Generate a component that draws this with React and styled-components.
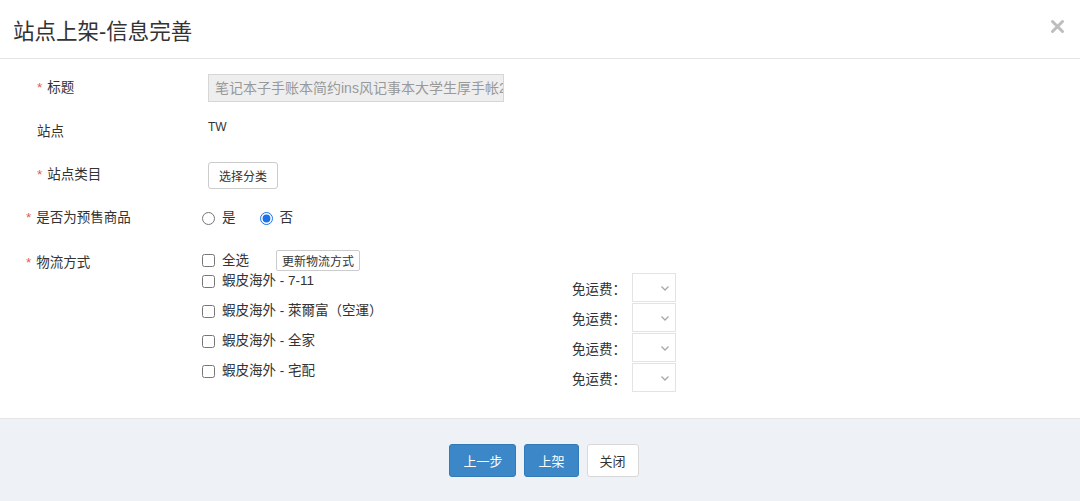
import React, { useState } from "react";
import styled, { createGlobalStyle } from "styled-components";

const GlobalStyle = createGlobalStyle`
  html, body {
    margin: 0;
    padding: 0;
    background: #fff;
  }
  body {
    font-family: "Liberation Sans", "Noto Sans CJK SC", sans-serif;
    color: #333;
  }
`;

const Dialog = styled.div`
  width: 1080px;
  height: 501px;
  display: flex;
  flex-direction: column;
  background: #fff;
`;

const Header = styled.div`
  height: 58px;
  border-bottom: 1px solid #e5e5e5;
  display: flex;
  align-items: center;
  justify-content: space-between;
  padding: 0 15px 0 13px;
`;

const Title = styled.h3`
  margin: 0;
  font-size: 21.5px;
  font-weight: normal;
  color: #333;
`;

const CloseButton = styled.button`
  border: none;
  background: none;
  padding: 0;
  margin-top: -6px;
  cursor: pointer;
  display: flex;
`;

const Body = styled.div`
  flex: 1;
  padding-top: 7px;
`;

const FormRow = styled.div`
  display: grid;
  grid-template-columns: 202px 1fr;
  align-items: ${(p) => (p.$top ? "start" : "center")};
  height: ${(p) => (p.$h ? `${p.$h}px` : "auto")};
  padding-top: ${(p) => p.$pt || 0}px;
`;

const Label = styled.div`
  font-size: 13.5px;
  line-height: 20px;
  color: #333;
  padding-left: ${(p) => p.$indent}px;
  padding-top: ${(p) => p.$pt || 0}px;
`;

const Star = styled.span`
  color: #e05a4b;
  margin-right: 5px;
`;

const Value = styled.div`
  padding-left: ${(p) => p.$indent || 0}px;
  padding-top: ${(p) => p.$pt || 0}px;
  align-self: ${(p) => (p.$pt ? "start" : "auto")};
`;

const ReadonlyInput = styled.div`
  width: 296px;
  height: 28px;
  box-sizing: border-box;
  border: 1px solid #d6d6d6;
  background: #eeeeee;
  color: #999;
  font-size: 14px;
  line-height: 26px;
  padding-left: 6px;
  white-space: nowrap;
  overflow: hidden;
`;

const PlainText = styled.span`
  font-size: 12px;
  color: #333;
`;

const SmallButton = styled.button`
  font-family: inherit;
  font-size: 12px;
  color: #333;
  background: #fff;
  border: 1px solid #ccc;
  border-radius: ${(p) => (p.$tiny ? 2 : 3)}px;
  height: ${(p) => (p.$tiny ? 21 : 27)}px;
  padding: 0 ${(p) => (p.$tiny ? 5 : 10)}px;
  margin-left: ${(p) => p.$ml || 0}px;
  cursor: pointer;
`;

const RadioGroup = styled.div`
  display: flex;
  align-items: center;
`;

const Choice = styled.label`
  display: inline-flex;
  align-items: center;
  font-size: 13.5px;
  line-height: 20px;
  color: #333;
  margin-right: ${(p) => p.$mr || 0}px;

  input {
    margin: 0 7px 0 0;
    width: 13px;
    height: 13px;
    accent-color: #1a73e8;
  }
`;

const Shipping = styled.div`
  display: flex;
  align-items: flex-start;
`;

const CheckList = styled.div`
  width: 370px;
  display: flex;
  flex-direction: column;
`;

const CheckRow = styled.div`
  display: flex;
  align-items: center;
  height: ${(p) => (p.$first ? 21 : 20)}px;
  margin-top: ${(p) => (p.$first ? 0 : p.$gap)}px;
`;

const FeeColumn = styled.div`
  margin-top: 23px;
  display: flex;
  flex-direction: column;
`;

const FeeRow = styled.div`
  display: flex;
  align-items: center;
  height: 30px;
`;

const FeeLabel = styled.span`
  font-size: 13.5px;
  color: #333;
  width: 60px;
`;

const FeeSelect = styled.div`
  width: 44px;
  height: 29px;
  box-sizing: border-box;
  border: 1px solid #e3e3e3;
  display: flex;
  align-items: center;
  justify-content: flex-end;
  padding-right: 4px;
  margin-bottom: 1px;
  background: #fff;
`;

const Footer = styled.div`
  height: 82px;
  border-top: 1px solid #e5e5e5;
  background: #eef2f7;
  display: flex;
  align-items: center;
  justify-content: center;
  gap: 8px;
  padding-left: 8px;
`;

const FooterButton = styled.button`
  font-family: inherit;
  font-size: 13px;
  height: 33px;
  padding: 0 ${(p) => p.$px}px;
  border-radius: 3px;
  cursor: pointer;
  background: ${(p) => (p.$primary ? "#3c87c7" : "#fff")};
  color: ${(p) => (p.$primary ? "#fff" : "#333")};
  border: 1px solid ${(p) => (p.$primary ? "#3279b8" : "#d8d8d8")};
`;

const Chevron = () => (
  <svg width="12" height="12" viewBox="0 0 12 12">
    <path d="M2.5 4.5 L6 8 L9.5 4.5" fill="none" stroke="#a8a8a8" strokeWidth="1.3" />
  </svg>
);

const CloseIcon = () => (
  <svg width="15" height="15" viewBox="0 0 15 15">
    <path
      d="M2.5 2.5 L12.5 12.5 M12.5 2.5 L2.5 12.5"
      stroke="#bdbdbd"
      strokeWidth="3"
      strokeLinecap="round"
    />
  </svg>
);

const methods = [
  "蝦皮海外 - 7-11",
  "蝦皮海外 - 萊爾富（空運）",
  "蝦皮海外 - 全家",
  "蝦皮海外 - 宅配",
];

const App = () => {
  const [presale, setPresale] = useState("no");
  const [checked, setChecked] = useState([]);

  const toggle = (i) =>
    setChecked((c) => (c.includes(i) ? c.filter((x) => x !== i) : [...c, i]));

  const allChecked = checked.length === methods.length;

  return (
    <>
      <GlobalStyle />
      <Dialog>
        <Header>
          <Title>站点上架-信息完善</Title>
          <CloseButton>
            <CloseIcon />
          </CloseButton>
        </Header>

        <Body>
          <FormRow $h={44}>
            <Label $indent={37}>
              <Star>*</Star>标题
            </Label>
            <Value $indent={6}>
              <ReadonlyInput>笔记本子手账本简约ins风记事本大学生厚手帐2021</ReadonlyInput>
            </Value>
          </FormRow>

          <FormRow $h={42}>
            <Label $indent={37} $pt={2}>站点</Label>
            <Value $indent={6} $pt={7}>
              <PlainText>TW</PlainText>
            </Value>
          </FormRow>

          <FormRow $h={46}>
            <Label $indent={37}>
              <Star>*</Star>站点类目
            </Label>
            <Value $indent={6}>
              <SmallButton>选择分类</SmallButton>
            </Value>
          </FormRow>

          <FormRow $h={40}>
            <Label $indent={26}>
              <Star>*</Star>是否为预售商品
            </Label>
            <Value>
              <RadioGroup>
                <Choice $mr={24}>
                  <input
                    type="radio"
                    name="presale"
                    checked={presale === "yes"}
                    onChange={() => setPresale("yes")}
                  />
                  是
                </Choice>
                <Choice>
                  <input
                    type="radio"
                    name="presale"
                    checked={presale === "no"}
                    onChange={() => setPresale("no")}
                  />
                  否
                </Choice>
              </RadioGroup>
            </Value>
          </FormRow>

          <FormRow $top $pt={12}>
            <Label $indent={26} $pt={3}>
              <Star>*</Star>物流方式
            </Label>
            <Shipping>
              <CheckList>
                <CheckRow $first>
                  <Choice>
                    <input
                      type="checkbox"
                      checked={allChecked}
                      onChange={() =>
                        setChecked(allChecked ? [] : methods.map((_, i) => i))
                      }
                    />
                    全选
                  </Choice>
                  <SmallButton $tiny $ml={27}>
                    更新物流方式
                  </SmallButton>
                </CheckRow>
                {methods.map((m, i) => (
                  <CheckRow key={m} $gap={i === 0 ? 0 : 10}>
                    <Choice>
                      <input
                        type="checkbox"
                        checked={checked.includes(i)}
                        onChange={() => toggle(i)}
                      />
                      {m}
                    </Choice>
                  </CheckRow>
                ))}
              </CheckList>
              <FeeColumn>
                {methods.map((m) => (
                  <FeeRow key={m}>
                    <FeeLabel>免运费：</FeeLabel>
                    <FeeSelect>
                      <Chevron />
                    </FeeSelect>
                  </FeeRow>
                ))}
              </FeeColumn>
            </Shipping>
          </FormRow>
        </Body>

        <Footer>
          <FooterButton $primary $px={13}>上一步</FooterButton>
          <FooterButton $primary $px={13}>上架</FooterButton>
          <FooterButton $px={12}>关闭</FooterButton>
        </Footer>
      </Dialog>
    </>
  );
};

export default App;
